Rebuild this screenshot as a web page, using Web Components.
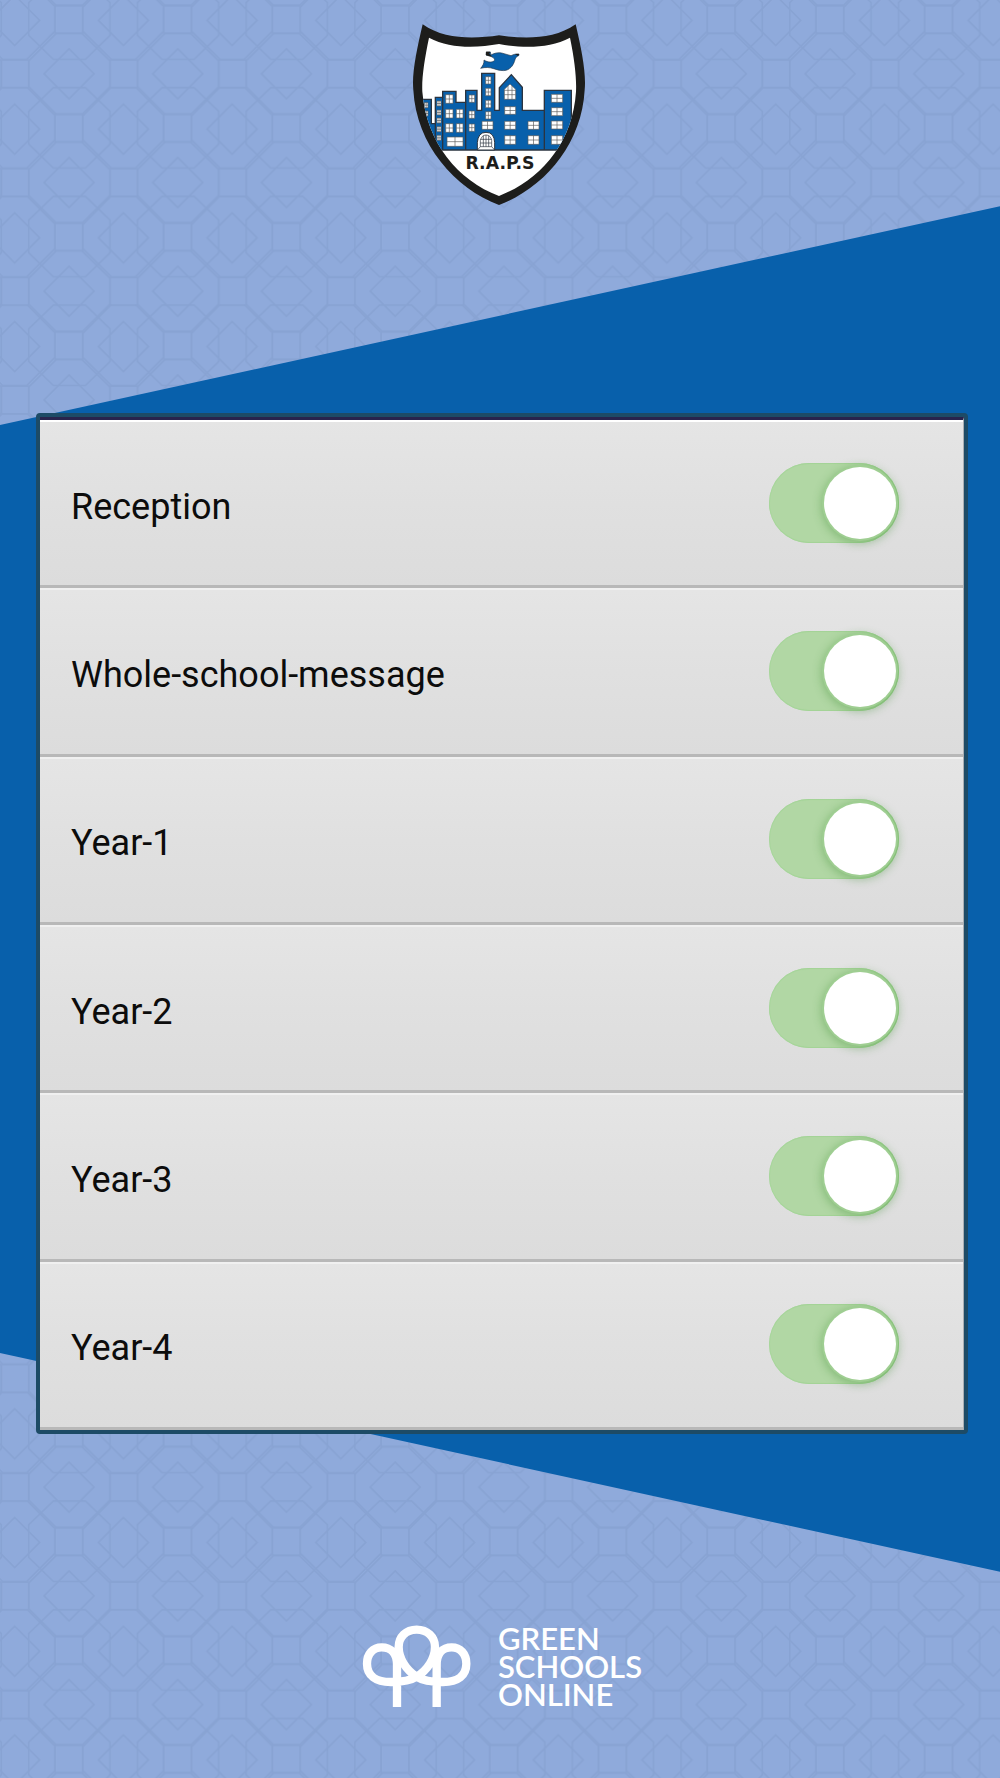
<!DOCTYPE html>
<html lang="en">
<head>
<meta charset="utf-8">
<meta name="viewport" content="width=device-width, initial-scale=1">
<title>School message settings</title>
<style>
  html, body { margin: 0; min-height: 100%; }
  body { font-family: Roboto, "Liberation Sans", sans-serif; background: #8faadb; }
</style>
</head>
<body>
<message-settings-page>
  <school-crest slot="crest"></school-crest>
  <channel-list>
    <channel-row name="Reception"></channel-row>
    <channel-row name="Whole-school-message"></channel-row>
    <channel-row name="Year-1"></channel-row>
    <channel-row name="Year-2"></channel-row>
    <channel-row name="Year-3"></channel-row>
    <channel-row name="Year-4"></channel-row>
  </channel-list>
  <provider-brand slot="brand"></provider-brand>
</message-settings-page>

<script>
class BaseElement extends HTMLElement {
  constructor() {
    super();
    this.attachShadow({ mode: 'open' });
  }
  connectedCallback() {
    this.shadowRoot.innerHTML = this.render();
  }
}

/* Pattern wallpaper with the slanted blue band across the middle. */
class PatternBackdrop extends BaseElement {
  render() {
    const step = 326;
    let motifs = '';
    for (let x = -1; x <= 1; x++)
      for (let y = -1; y <= 1; y++)
        motifs += `<use href="#motif" x="${x * step}" y="${y * step}"/>`;
    return `
      <style>
        :host { display: grid; }
        svg, .band { grid-area: 1 / 1; width: 100%; height: 100%; display: block; }
        .band { background: #0860ab; clip-path: polygon(0 23.9%, 100% 11.6%, 100% 88.4%, 0 76.1%); }
      </style>
      <svg aria-hidden="true">
        <defs>
          <g id="motif" fill="none" stroke="#88a3d3" stroke-width="5">
            <path d="M165 17H248V100H165ZM4 180H86V263H4Z"/>
            <path d="M169 100H245L330 183V260L247 342H168L86 260V183Z"/>
            <path d="M6 -63H82L165 20V93L80 178H8L-78 93V22Z"/>
            <path d="M160 178H256L330 106V8L256 -63H160L86 8V106Z"/>
            <path d="M207 146L282 221L207 296L132 221ZM44 -14L119 61L44 136L-31 61Z"/>
          </g>
          <pattern id="tiles" width="326" height="326" patternUnits="userSpaceOnUse" patternTransform="scale(.3335)">${motifs}</pattern>
        </defs>
        <rect width="100%" height="100%" fill="#8faadb"/>
        <rect width="100%" height="100%" fill="url(#tiles)"/>
      </svg>
      <div class="band"></div>`;
  }
}

class MessageSettingsPage extends BaseElement {
  render() {
    return `
      <style>
        :host { display: grid; min-height: 100vh; }
        pattern-backdrop, .content { grid-area: 1 / 1; min-width: 0; }
        .content { position: relative; display: flex; flex-direction: column; box-sizing: border-box; padding: 10px 32px 68px 36px; }
        header { display: flex; justify-content: center; padding-right: 4px; }
        main { margin-top: 198px; }
        footer { display: flex; justify-content: center; margin-top: 190px; }
      </style>
      <pattern-backdrop></pattern-backdrop>
      <div class="content">
        <header><slot name="crest"></slot></header>
        <main><slot></slot></main>
        <footer><slot name="brand"></slot></footer>
      </div>`;
  }
}

class SchoolCrest extends BaseElement {
  /* One window: a white box with cross bars. */
  pane([x, y, w, h]) {
    return `<path d="M${x} ${y}h${w}v${h}h${-w}z" fill="#fff"/><path d="M${x + w / 2} ${y}v${h}M${x} ${y + h / 2}h${w}"/>`;
  }
  render() {
    const panes = [
      [73, 278, 11, 15], [73, 303, 11, 15],
      [111, 273, 12, 15], [111, 300, 12, 15], [111, 324, 12, 15], [111, 350, 12, 15], [111, 376, 12, 15],
      [137, 254, 22, 26], [137, 298, 22, 26], [137, 341, 22, 26], [169, 298, 20, 26], [169, 341, 20, 26],
      [141, 381, 48, 28],
      [207, 255, 17, 22], [207, 303, 17, 22], [207, 342, 17, 22],
      [257, 200, 16, 22], [257, 235, 16, 22], [257, 271, 16, 22], [257, 305, 16, 22], [246, 334, 33, 24],
      [314, 290, 33, 23], [314, 334, 33, 24], [314, 377, 33, 26],
      [384, 334, 33, 24], [384, 377, 33, 26],
      [454, 253, 34, 24], [454, 293, 34, 24], [454, 333, 34, 24], [454, 377, 34, 26]
    ].map(this.pane).join('');
    return `
      <style>
        :host { display: block; }
        svg { display: block; width: 200px; height: 205px; }
        text { font: bold 52px "DejaVu Sans", "Liberation Sans", sans-serif; fill: #1d1d1b; }
      </style>
      <svg viewBox="0 0 600 615" role="img" aria-label="R.A.P.S school crest">
        <defs><clipPath id="field"><path d="M87 83C150 117 230 114 297 102C365 114 447 117 510 83C524 150 530 205 528 245C518 400 420 510 297 558C174 510 80 400 67 245C65 205 73 150 87 83Z"/></clipPath></defs>
        <path fill="#1d1d1b" d="M68 43C134 90 225 87 297 76C370 87 460 90 527 43C545 120 559 190 554 240C545 405 430 535 297 585C165 535 49 405 40 240C35 190 50 120 68 43Z"/>
        <path fill="#fff" d="M87 83C150 117 230 114 297 102C365 114 447 117 510 83C524 150 530 205 528 245C518 400 420 510 297 558C174 510 80 400 67 245C65 205 73 150 87 83Z"/>
        <g clip-path="url(#field)" stroke="#2b3440" stroke-width="4" fill="#0860ab">
          <path d="M60 268H94V341H106V262H128V244H168V277H197V241H231V301H245V190H284V301H298V233L334 194L367 232V301H433V241H514V420H60Z"/>
          <path d="M106 341V420M128 262V420M197 277V420M433 301V420" fill="none"/>
          <g stroke-width="2" stroke="#5a5a5a">${panes}
            <path fill="#fff" d="M313 268V238L330 222L347 238V268Z"/><path d="M324 228V268M336 228V268M313 241H347M313 254H347" fill="none"/>
          </g>
          <path fill="#fff" stroke-width="3" d="M232 420V398Q234 367 258 367Q283 367 284 398V420Z"/>
          <path fill="none" stroke-width="2" d="M241 410V392Q245 375 258 375Q272 375 275 392V410ZM250 377V410M258 375V410M266 377V410M241 388H275M241 399H275M232 420L241 410M284 420L275 410"/>
        </g>
        <path fill="#0860ab" stroke="#26384b" stroke-width="2" d="M258 135C266 138 280 139 283 147C286 152 279 156 272 156C264 157 257 153 252 150C253 160 248 168 242 175C256 171 270 172 281 176C295 181 308 183 318 181C334 176 341 163 345 149C347 141 352 138 356 137L357 132C349 131 341 133 333 137L305 129C294 127 283 129 273 135L271 126H259Z"/>
        <path fill="#1d1d1b" d="M258 125L271 125L268 131L276 140L258 136ZM345 132L357 132L354 138Z"/>
        <text x="300" y="477" text-anchor="middle">R.A.P.S</text>
      </svg>`;
  }
}

class ChannelList extends BaseElement {
  render() {
    return `
      <style>
        :host { display: block; border: 4px solid #1d4b66; border-radius: 4px; background: #dedede; }
        .rows { border-top: 3px solid #28244d; display: grid; grid-auto-rows: 1fr; min-height: 1010px; border-right: 1px solid #a9adb2; }
      </style>
      <div class="rows" role="group" aria-label="Message channels"><slot></slot></div>`;
  }
}

class ChannelRow extends BaseElement {
  render() {
    const name = this.getAttribute('name');
    return `
      <style>
        :host {
          display: flex; align-items: center; justify-content: space-between; box-sizing: border-box;
          min-height: 160px; padding: 0 64px 2px 31px;
          border-top: 2px solid #f0f0f0; border-bottom: 3px solid #b8b8b8;
          background: linear-gradient(#e5e5e5, #e0e0e0 50%, #dcdcdc);
        }
        :host(:first-child) { border-top-color: #fff; }
        label { font-size: 36px; line-height: 44px; padding-top: 8px; color: #0c0c0c; }
        input {
          appearance: none; margin: 0; flex: none; box-sizing: border-box;
          width: 130px; height: 80px; padding: 4px 3px; border-radius: 40px;
          display: flex; justify-content: flex-start;
          background: #c4c4c4; cursor: pointer;
        }
        input:checked { justify-content: flex-end; background: #b1d7a4; box-shadow: inset -2px 0 2px #98cd8b, inset 0 0 0 1px #a8d69c; }
        input::before {
          content: ""; width: 72px; height: 72px; border-radius: 50%; background: #fff;
          box-shadow: 0 0 0 2px #9fce92, 0 2px 8px 3px rgba(60, 140, 50, .36);
        }
      </style>
      <label for="toggle">${name}</label>
      <input id="toggle" type="checkbox" role="switch" checked>`;
  }
}

class ProviderBrand extends BaseElement {
  render() {
    return `
      <style>
        :host { display: flex; align-items: center; gap: 27px; color: #fff; }
        svg { display: block; width: 109px; height: 84px; }
        p { margin: 0; font: 600 31px/28px Lato, "Open Sans", sans-serif; white-space: pre-line; }
      </style>
      <svg viewBox="64 68 327 252" aria-hidden="true">
        <path fill="none" stroke="currentColor" stroke-width="25" stroke-linejoin="round" d="M169 317V190C169 155 150 138 123 138C97 138 79 158 79 187C79 222 105 242 150 242C185 242 212 237 228 226C262 205 283 170 283 137C283 107 260 85 228 85C196 85 174 107 174 137C174 170 195 205 228 226C245 237 272 242 307 242C352 242 377 222 377 187C377 158 359 138 333 138C306 138 288 155 288 190V317"/>
      </svg>
      <p>GREEN
SCHOOLS
ONLINE</p>`;
  }
}

customElements.define('pattern-backdrop', PatternBackdrop);
customElements.define('message-settings-page', MessageSettingsPage);
customElements.define('school-crest', SchoolCrest);
customElements.define('channel-list', ChannelList);
customElements.define('channel-row', ChannelRow);
customElements.define('provider-brand', ProviderBrand);
</script>
</body>
</html>
